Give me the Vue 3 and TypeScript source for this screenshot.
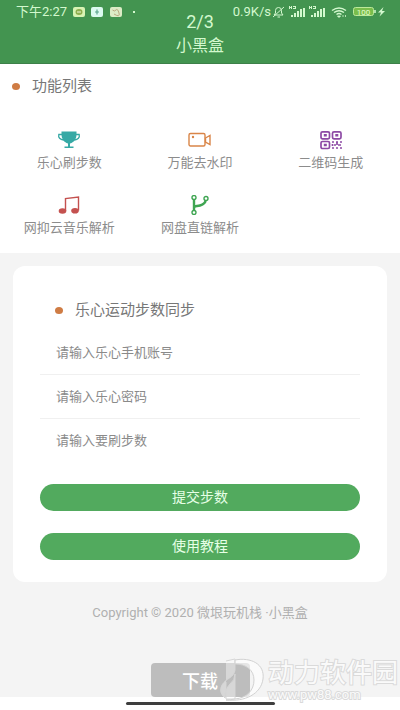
<script setup lang="ts">
import { ref } from 'vue'

interface Feature {
  icon: 'trophy' | 'video' | 'qr' | 'music' | 'branch'
  label: string
}

interface Field {
  id: string
  type: string
  placeholder: string
}

const features: Feature[] = [
  { icon: 'trophy', label: '乐心刷步数' },
  { icon: 'video', label: '万能去水印' },
  { icon: 'qr', label: '二维码生成' },
  { icon: 'music', label: '网抑云音乐解析' },
  { icon: 'branch', label: '网盘直链解析' },
]

const fields: Field[] = [
  { id: 'phone', type: 'tel', placeholder: '请输入乐心手机账号' },
  { id: 'password', type: 'password', placeholder: '请输入乐心密码' },
  { id: 'steps', type: 'text', placeholder: '请输入要刷步数' },
]

const values = ref<Record<string, string>>({ phone: '', password: '', steps: '' })
</script>

<template>
  <div class="page">
    <header class="header">
      <div class="status">
        <div class="status-side">
          <span>下午2:27</span>
          <svg class="apps" viewBox="0 0 60 12" aria-hidden="true">
            <rect x="0" y="1" width="12" height="10" rx="2" fill="#d9f3b4" />
            <ellipse cx="6" cy="6" rx="3.5" ry="3" fill="#8fae4e" />
            <path d="M4 6h4" stroke="#eefadb" />
            <rect x="18" y="1" width="12" height="10" rx="2" fill="#dcfaf0" />
            <path d="M24 3.500v5M22 6h4" stroke="#5aa48c" stroke-width="1.200" />
            <rect x="37" y="1" width="12" height="10" rx="2" fill="#dcecc6" />
            <path d="M39.500 4q2 2 3.500 0t3 3-5 1" fill="none" stroke="#b9a67e" />
          </svg>
          <span class="dot-mark"></span>
        </div>
        <div class="status-side">
          <span>0.9K/s</span>
          <svg class="signals" viewBox="0 0 116 14" aria-hidden="true" fill="none" stroke="#d3f8ce">
            <path d="M3 10h9l-1.500-2V5.500a3 3 0 0 0-6 0V8zM6.500 12h2.500M2 12 13 2" />
            <g stroke="none" fill="#d3f8ce">
              <path d="M18 1h1v3h-1zM20 1h1v3h-1zM18 2h3v1h-3zM22 1h3v1h-3zM22 3h3v1h-3zM24 1h1v3h-1zM20 10h2v2h-2zM23 8h2v4h-2zM26 6h2v6h-2zM29 4h2v8h-2zM32 3h2v9h-2z" />
              <path transform="translate(20)" d="M18 1h1v3h-1zM20 1h1v3h-1zM18 2h3v1h-3zM22 1h3v1h-3zM22 3h3v1h-3zM24 1h1v3h-1zM20 10h2v2h-2zM23 8h2v4h-2zM26 6h2v6h-2zM29 4h2v8h-2zM32 3h2v9h-2z" />
            </g>
            <path d="M61 5.500q7-5 14 0M63 7.500q5-3.500 10 0M65.500 9.500q2.500-2 5 0" stroke-width="1.400" />
            <path d="M66.500 11h3L68 12.500zM72 10v2M74.500 10v2" fill="#d3f8ce" stroke-width=".8" />
            <rect x="82.500" y="2.500" width="20" height="8" rx="2" fill="#79bd4c" stroke="#bce99a" />
            <path d="M104 5v3" stroke-width="1.500" />
            <text x="92.500" y="9.500" class="battery-text">100</text>
            <path d="M112.500 2 107 7.500h3l-1.500 4L114 6h-3z" fill="#d3f8ce" stroke="none" />
          </svg>
        </div>
      </div>
      <div class="counter">2/3</div>
      <h1 class="app-name">小黑盒</h1>
    </header>

    <section class="features">
      <h2 class="heading"><span class="bullet"></span>功能列表</h2>
      <nav class="grid">
        <a v-for="item in features" :key="item.label" class="feature" href="#">
          <svg class="icon" viewBox="0 0 24 20" aria-hidden="true">
            <g v-if="item.icon === 'trophy'" fill="#36a9a5">
              <path d="M4.500 1.500h15v3q0 6-5 8.500l-1.500.5v3h3.500v1.500h-9v-1.500H11v-3l-1.500-.5Q4.500 10.500 4.500 4.500z" />
              <path d="M5.500 4.500H1.800c-.8 3 1.300 5 4.800 5.500M18.500 4.500h3.700c.8 3-1.300 5-4.800 5.500" fill="none" stroke="#36a9a5" stroke-width="1.300" />
            </g>
            <g v-else-if="item.icon === 'video'" fill="none" stroke="#d98548" stroke-width="1.400">
              <rect x="1" y="3.500" width="16" height="12.500" rx="1.500" />
              <path d="m17.500 8 4.500-2.500v9L17.500 12z" />
              <circle cx="5" cy="7" r="1.200" fill="#d98548" stroke="none" />
            </g>
            <g v-else-if="item.icon === 'qr'" fill="none" stroke="#8d4aa5" stroke-width="1.700">
              <rect x="2" y="1.800" width="8.500" height="7" rx="1.500" />
              <rect x="13.500" y="1.800" width="8.500" height="7" rx="1.500" />
              <rect x="2" y="11.500" width="8.500" height="7" rx="1.500" />
              <path d="M4.800 5.300h3M16.300 5.300h3M4.800 15h3" stroke-width="2.500" />
              <path d="M13 12h2M17 12h2M21 12h2M15 15h2M19 15h3M13 18h2M17 18h2M21 18h2M13.500 14v2M18 12v3" stroke-width="1.700" />
            </g>
            <g v-else-if="item.icon === 'music'" fill="#c4514f">
              <path d="M8.500 16V3.500L21.500 2v13.500" fill="none" stroke="#c4514f" stroke-width="1.400" />
              <ellipse cx="5.500" cy="16" rx="3.800" ry="2.800" />
              <ellipse cx="18" cy="15.800" rx="3.800" ry="2.800" />
            </g>
            <g v-else fill="none" stroke="#3fa552" stroke-width="1.400">
              <circle cx="6" cy="2.500" r="2" />
              <circle cx="6" cy="17.500" r="2" />
              <circle cx="18" cy="3.500" r="2" />
              <path d="M6 4.500v11M6 13c0-2.500 3-1.500 6-2.500s5.500-2 5.500-5" stroke-width="2.400" />
            </g>
          </svg>
          <span>{{ item.label }}</span>
        </a>
      </nav>
    </section>

    <main class="main">
      <form class="card" @submit.prevent>
        <h2 class="heading card-heading"><span class="bullet"></span>乐心运动步数同步</h2>
        <div v-for="field in fields" :key="field.id" class="field">
          <input
            :id="field.id"
            v-model="values[field.id]"
            class="input"
            :type="field.type"
            :placeholder="field.placeholder"
            :aria-label="field.placeholder"
          />
        </div>
        <div class="actions">
          <button class="pill" type="submit">提交步数</button>
          <button class="pill" type="button">使用教程</button>
        </div>
      </form>
      <p class="copyright">Copyright © 2020 微垠玩机栈 ·小黑盒</p>
      <button class="download" type="button">下载</button>
    </main>

    <footer class="home"><span class="home-bar"></span></footer>

    <div class="watermark" aria-hidden="true">
      <svg class="mark" viewBox="0 0 48 46">
        <path d="M8 3 17 1v11C16 20 8 20 4 27q-4 7 3 13 0-9 5-14 5-4 5-10v25h-9V24" fill="#fff" fill-opacity=".4" stroke="#d6d6d6" />
        <path d="M17 2c16-3 30 4 28 19S27 44 8 42q4 0 9-1c12-1 19-9 19-19S28 6 17 6z" fill="#fff" fill-opacity=".6" stroke="#d2d2d2" />
      </svg>
      <div class="mark-text">
        <span class="mark-name">动力软件园</span>
        <span class="mark-url">www.pw88.com</span>
      </div>
    </div>
  </div>
</template>

<style>
body {
  margin: 0;
  background: #fff;
}
</style>

<style scoped>
.page {
  position: relative;
  display: flex;
  flex-direction: column;
  min-height: 100vh;
  font-family: Roboto, "Noto Sans CJK SC", sans-serif;
  color: #777;
}

.header {
  display: flex;
  flex-direction: column;
  align-items: center;
  height: 64px;
  box-sizing: border-box;
  background: #439450;
  border-bottom: 1px solid #3d8049;
  color: #d3f8ce;
}

.status {
  display: flex;
  justify-content: space-between;
  align-self: stretch;
  height: 12px;
  padding: 6px 13px 0 16px;
  font-size: 13px;
  line-height: 12px;
}

.status-side {
  display: flex;
  align-items: center;
}

.apps {
  width: 60px;
  height: 12px;
  margin-left: 6px;
}

.signals {
  width: 116px;
  height: 14px;
}

.dot-mark {
  width: 2px;
  height: 2px;
  background: #d3f8ce;
}

.battery-text {
  fill: #e5ffd0;
  stroke: none;
  font-size: 8px;
  text-anchor: middle;
}

.counter {
  height: 16px;
  font-size: 18px;
  line-height: 8px;
}

.app-name {
  margin: 0;
  font-size: 16px;
  font-weight: 400;
  line-height: 24px;
}

.features {
  height: 189px;
  background: #fff;
}

.heading {
  display: flex;
  align-items: center;
  gap: 12px;
  margin: 0;
  padding: 12px 12px 0;
  font-size: 15px;
  font-weight: 400;
  line-height: 20px;
  color: #777;
}

.bullet {
  width: 8px;
  height: 7px;
  border-radius: 50%;
  background: #cf7c44;
}

.grid {
  display: grid;
  grid-template-columns: repeat(3, 1fr);
  row-gap: 24px;
  padding: 34px 4px 0;
}

.feature {
  display: flex;
  flex-direction: column;
  align-items: center;
  gap: 5px;
  font-size: 13px;
  line-height: 16px;
  color: #8c8c8c;
  text-decoration: none;
}

.icon {
  width: 24px;
  height: 20px;
}

.main {
  display: flex;
  flex: 1;
  flex-direction: column;
  align-items: center;
  padding: 13px 13px 0;
  background: #f4f4f4;
}

.card {
  align-self: stretch;
  padding: 22px 27px;
  border-radius: 12px;
  background: #fff;
}

.card-heading {
  padding: 12px 15px 11px;
}

.field {
  border-bottom: 1px solid #f0f0f0;
}

.field:nth-of-type(3) {
  border-bottom-color: transparent;
}

.input {
  display: block;
  width: 100%;
  height: 43px;
  box-sizing: border-box;
  padding: 0 16px;
  border: 0;
  outline: 0;
  background: transparent;
  font: inherit;
  font-size: 13px;
  color: #777;
}

.input::placeholder {
  color: #8a8a8a;
  opacity: 1;
}

.actions {
  display: flex;
  flex-direction: column;
  gap: 22px;
  padding-top: 21px;
}

.pill {
  height: 27px;
  padding: 0;
  border: 0;
  border-radius: 16px;
  background: #52aa5e;
  font: inherit;
  font-size: 14px;
  line-height: 27px;
  color: #e6ffe6;
}

.copyright {
  margin: 21px 0 0;
  font-size: 13px;
  line-height: 20px;
  color: #b0b0b0;
}

.download {
  width: 99px;
  height: 34px;
  margin-top: auto;
  padding: 0;
  border: 0;
  border-radius: 4px;
  background: #bdbdbd;
  font: inherit;
  font-size: 18px;
  font-weight: 500;
  color: #fff;
}

.home {
  display: flex;
  justify-content: center;
  height: 13px;
  background: #fff;
}

.home-bar {
  width: 149px;
  height: 3px;
  margin-top: 5px;
  border-radius: 2px;
  background: #3e3e3e;
}

.watermark {
  position: absolute;
  right: 2px;
  bottom: 6px;
  display: flex;
  align-items: center;
  gap: 2px;
  pointer-events: none;
}

.mark {
  width: 48px;
  height: 46px;
}

.mark-text {
  display: flex;
  flex-direction: column;
  color: #fafafa;
  -webkit-text-stroke: 2px #dadada;
  paint-order: stroke fill;
}

.mark-name {
  font-size: 26px;
  line-height: 28px;
}

.mark-url {
  font-size: 13px;
  line-height: 16px;
}
</style>
